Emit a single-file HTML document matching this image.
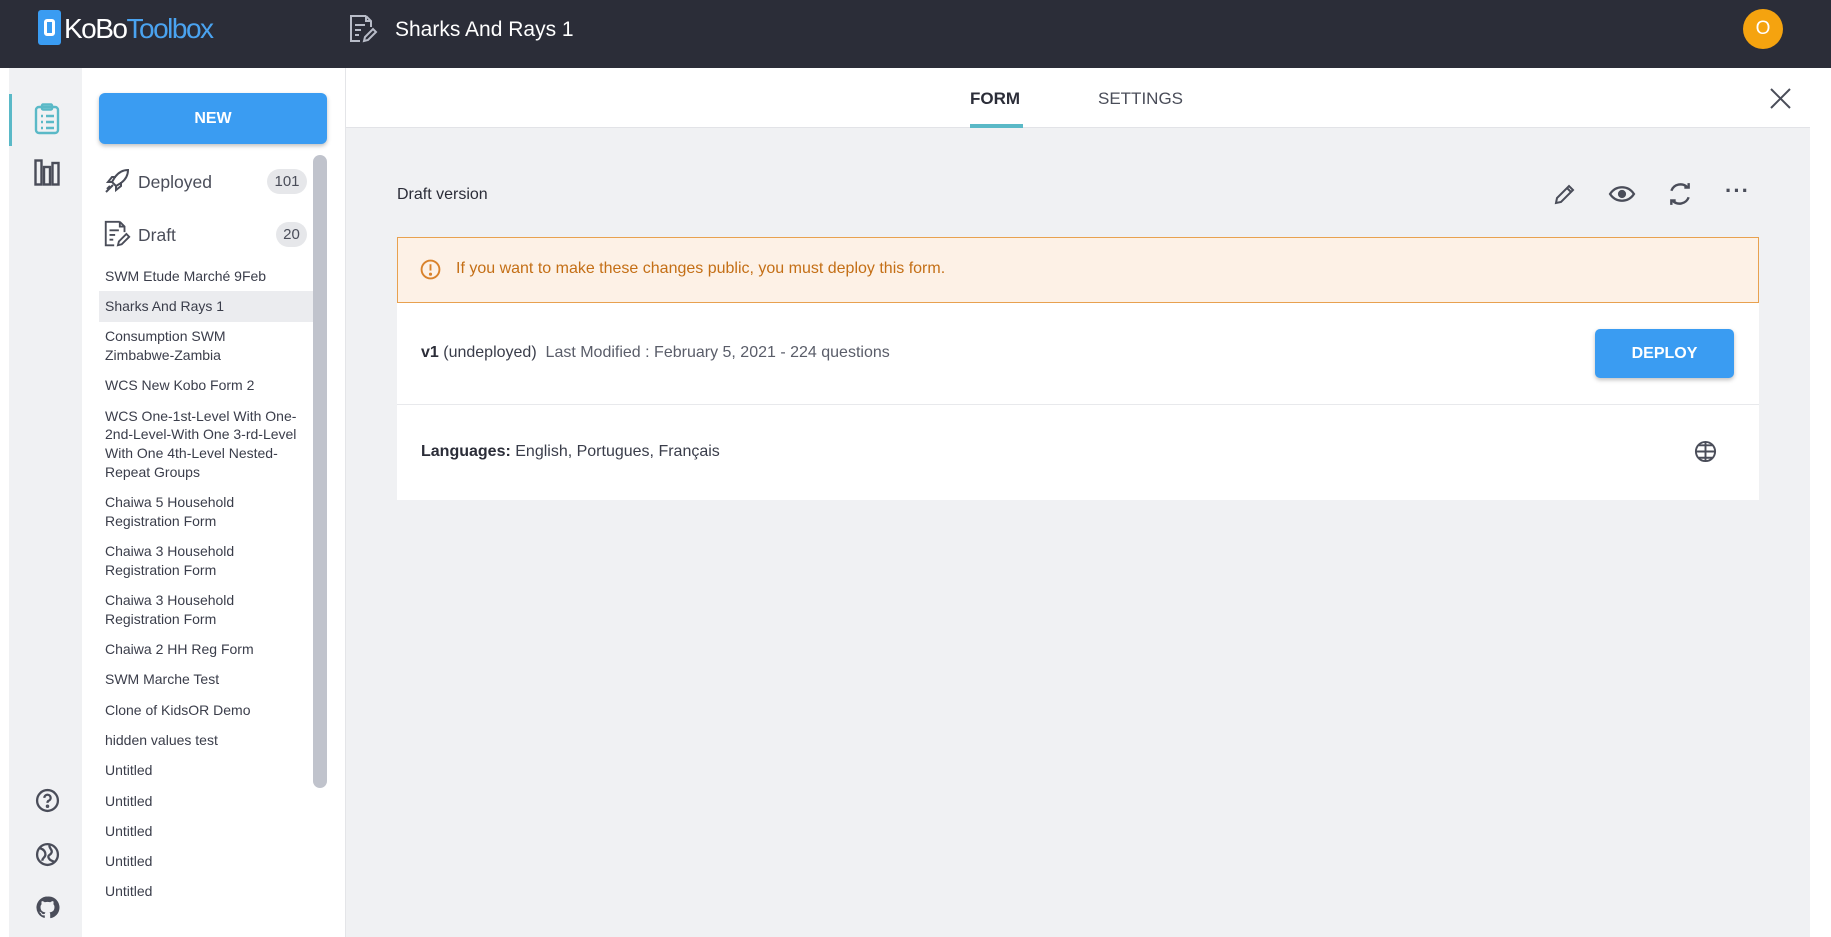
<!DOCTYPE html>
<html><head><meta charset="utf-8"><style>
*{box-sizing:border-box;margin:0;padding:0}
body{width:1831px;height:937px;overflow:hidden;font-family:"Liberation Sans",sans-serif;background:#fff;position:relative;color:#3a3d4a}
.abs{position:absolute}
#hdr{left:0;top:0;width:1831px;height:68px;background:#2b2d38}
#rail{left:9px;top:68px;width:73px;height:869px;background:#f0f1f3}
#side{left:82px;top:68px;width:264px;height:869px;background:#fff;border-right:1px solid #e4e5e8}
#main{left:346px;top:68px;width:1464px;height:869px;background:#f0f1f3}
#tabs{left:346px;top:68px;width:1464px;height:60px;background:#fff;border-bottom:1px solid #e2e3e7}
.item{font-size:14px;line-height:18.7px;padding:5.8px 0 5.8px 6px;color:#3a3d4a;width:214px;margin-left:17px}
.sel{background:#ebecef}
svg{display:block}
</style></head><body>
<div id="hdr" class="abs"></div>
<div class="abs" style="left:38px;top:10px;width:23px;height:35px;background:#3a9cf2;border-radius:3px"></div>
<div class="abs" style="left:44px;top:19px;width:11px;height:17px;border:3px solid #fff;border-radius:3px"></div>
<div class="abs" style="left:64px;top:13px;font-size:28px;color:#fff;letter-spacing:-1.5px">KoBo<span style="color:#4aa3f0">Toolbox</span></div>
<svg class="abs" style="left:347px;top:13px" width="32" height="32" viewBox="0 0 32 32" fill="none" stroke="#b8bcc8" stroke-width="2"><path d="M19 3H4v25h9M19 3l5 5v6M19 3v5h5M8 12h10M8 17h6M8 22h4"/><path d="M17 28l1-4 8-8 3 3-8 8z"/></svg>
<div class="abs" style="left:395px;top:18px;font-size:21px;color:#fff">Sharks And Rays 1</div>
<div class="abs" style="left:1743px;top:9px;width:40px;height:40px;border-radius:50%;background:#f5a30f;color:#fff;font-size:19px;text-align:center;line-height:40px">O</div>

<div id="rail" class="abs"></div>
<div class="abs" style="left:9px;top:94px;width:3px;height:52px;background:#5ab9c7"></div>
<svg class="abs" style="left:34px;top:103px" width="26" height="32" viewBox="0 0 26 32" fill="none" stroke="#5ab9c7" stroke-width="2.4"><rect x="2" y="4" width="22" height="26" rx="3"/><rect x="8" y="1.5" width="10" height="5" rx="1"/><path d="M7 13h2M12 13h8M7 19h2M12 19h8M7 25h2M12 25h8"/></svg>
<svg class="abs" style="left:34px;top:159px" width="26" height="27" viewBox="0 0 26 27" fill="none" stroke="#4a4d59" stroke-width="2.4"><rect x="1.5" y="1.5" width="6" height="24"/><rect x="10" y="8" width="6" height="17.5"/><rect x="18.5" y="4" width="6" height="21.5"/></svg>
<svg class="abs" style="left:35px;top:788px" width="25" height="25" viewBox="0 0 24 24" fill="none" stroke="#4a4d59" stroke-width="2.2"><circle cx="12" cy="12" r="10"/><path d="M9 9.5a3 3 0 1 1 4 2.8c-.8.4-1 1-1 2"/><circle cx="12" cy="17.5" r=".6" fill="#4a4d59"/></svg>
<svg class="abs" style="left:35px;top:842px" width="25" height="25" viewBox="0 0 24 24" fill="none" stroke="#4a4d59" stroke-width="2.2"><circle cx="12" cy="12" r="10"/><path d="M5 6c3 1 5 3 5 6s-3 3-3 6M14 3c-1 3 3 4 2 7s-4 2-3 5 4 3 5 4"/></svg>
<svg class="abs" style="left:35px;top:895px" width="25" height="25" viewBox="0 0 24 24" fill="#4a4d59"><path d="M12 1.5a10.5 10.5 0 0 0-3.3 20.5c.5.1.7-.2.7-.5v-2c-2.9.6-3.500-1.3-3.5-1.3-.5-1.200-1.200-1.500-1.200-1.500-1-.6 0-.6 0-.6 1 .1 1.600 1.100 1.600 1.100.9 1.600 2.500 1.100 3.100.9.1-.7.4-1.1.7-1.4-2.3-.3-4.8-1.2-4.8-5.2 0-1.1.4-2.1 1.1-2.8-.1-.3-.5-1.3.1-2.8 0 0 .9-.3 2.9 1.1a10 10 0 0 1 5.2 0c2-1.4 2.9-1.1 2.9-1.1.6 1.5.2 2.5.1 2.8.7.7 1.1 1.7 1.1 2.8 0 4-2.5 4.9-4.8 5.2.4.3.7 1 .7 2v3c0 .3.2.6.7.5A10.5 10.5 0 0 0 12 1.5z"/></svg>

<div id="side" class="abs"></div>
<div class="abs" style="left:99px;top:93px;width:228px;height:51px;background:#3a9cf2;border-radius:6px;box-shadow:0 2px 4px rgba(0,0,0,.25);color:#fff;font-weight:bold;font-size:16px;text-align:center;line-height:51px">NEW</div>
<div class="abs" style="left:313px;top:155px;width:14px;height:633px;background:#c0c3cc;border-radius:7px"></div>
<svg class="abs" style="left:104px;top:168px" width="26" height="26" viewBox="0 0 26 26" fill="none" stroke="#4a4d59" stroke-width="2"><path d="M24 2c-6 0-10 3-13 7l-3 5 4 4 5-3c4-3 7-7 7-13zM8 14l-4 0 4-5h4M12 18v4l5-4v-4M9 17l-7 7M6 18l-3 3"/></svg>
<div class="abs" style="left:138px;top:172px;font-size:17.5px;color:#4a4d59">Deployed</div>
<div class="abs" style="left:267px;top:169px;width:40px;height:25px;border-radius:13px;background:#e6e7ea;font-size:15px;text-align:center;line-height:25px;color:#4a4d59">101</div>
<svg class="abs" style="left:102px;top:219px" width="30" height="30" viewBox="0 0 32 32" fill="none" stroke="#4a4d59" stroke-width="2"><path d="M19 3H4v25h9M19 3l5 5v6M19 3v5h5M8 12h10M8 17h6M8 22h4"/><path d="M17 28l1-4 8-8 3 3-8 8z"/></svg>
<div class="abs" style="left:138px;top:225px;font-size:17.5px;color:#4a4d59">Draft</div>
<div class="abs" style="left:276px;top:222px;width:31px;height:25px;border-radius:13px;background:#e6e7ea;font-size:15px;text-align:center;line-height:25px;color:#4a4d59">20</div>
<div class="abs" style="left:82px;top:261px">
<div class="item">SWM Etude Marché 9Feb</div>
<div class="item sel">Sharks And Rays 1</div>
<div class="item">Consumption SWM<br>Zimbabwe-Zambia</div>
<div class="item">WCS New Kobo Form 2</div>
<div class="item">WCS One-1st-Level With One-<br>2nd-Level-With One 3-rd-Level<br>With One 4th-Level Nested-<br>Repeat Groups</div>
<div class="item">Chaiwa 5 Household<br>Registration Form</div>
<div class="item">Chaiwa 3 Household<br>Registration Form</div>
<div class="item">Chaiwa 3 Household<br>Registration Form</div>
<div class="item">Chaiwa 2 HH Reg Form</div>
<div class="item">SWM Marche Test</div>
<div class="item">Clone of KidsOR Demo</div>
<div class="item">hidden values test</div>
<div class="item">Untitled</div>
<div class="item">Untitled</div>
<div class="item">Untitled</div>
<div class="item">Untitled</div>
<div class="item">Untitled</div>
</div>

<div id="main" class="abs"></div>
<div id="tabs" class="abs"></div>
<div class="abs" style="left:970px;top:89px;font-size:17px;font-weight:bold;color:#2b2d38">FORM</div>
<div class="abs" style="left:970px;top:124px;width:53px;height:4px;background:#5ab9c7"></div>
<div class="abs" style="left:1098px;top:89px;font-size:17px;color:#4a4d59">SETTINGS</div>
<svg class="abs" style="left:1770px;top:88px" width="21" height="21" viewBox="0 0 21 21" stroke="#4a4d59" stroke-width="2"><path d="M1 1l19 19M20 1L1 20"/></svg>

<div class="abs" style="left:397px;top:186px;font-size:16px;color:#2b2d38">Draft version</div>
<svg class="abs" style="left:1553px;top:182px" width="24" height="24" viewBox="0 0 24 24" fill="none" stroke="#4a4d59" stroke-width="2"><path d="M3 21l1-5L16 4l4 4L8 20zM14 6l4 4"/></svg>
<svg class="abs" style="left:1608px;top:183px" width="28" height="22" viewBox="0 0 28 22" fill="none" stroke="#4a4d59" stroke-width="2.2"><path d="M2 11c6-9 18-9 24 0-6 9-18 9-24 0z"/><circle cx="14" cy="11" r="3" fill="#4a4d59"/></svg>
<svg class="abs" style="left:1667px;top:181px" width="26" height="26" viewBox="0 0 24 24" fill="none" stroke="#4a4d59" stroke-width="2.2"><path d="M19 6A9 9 0 0 0 4 9M5 18a9 9 0 0 0 15-3M16 6h4V2M8 18H4v4"/></svg>
<div class="abs" style="left:1725px;top:178px;font-size:22px;font-weight:bold;color:#4a4d59;letter-spacing:1px">···</div>

<div class="abs" style="left:397px;top:237px;width:1362px;height:66px;background:#fdf1e6;border:1px solid #e8a14f"></div>
<svg class="abs" style="left:420px;top:259px" width="21" height="21" viewBox="0 0 20 20" fill="none" stroke="#d9822b" stroke-width="1.8"><circle cx="10" cy="10" r="8.5"/><path d="M10 5v6"/><circle cx="10" cy="14.5" r=".6" fill="#d9822b"/></svg>
<div class="abs" style="left:456px;top:260px;font-size:16px;color:#c46f16">If you want to make these changes public, you must deploy this form.</div>

<div class="abs" style="left:397px;top:303px;width:1362px;height:197px;background:#fff"></div>
<div class="abs" style="left:397px;top:404px;width:1362px;height:1px;background:#e8e9ec"></div>
<div class="abs" style="left:421px;top:344px;font-size:16px;color:#3a3d4a"><b style="color:#2b2d38">v1</b> (undeployed) <span style="color:#5a5d69">&nbsp;Last Modified : February 5, 2021 - 224 questions</span></div>
<div class="abs" style="left:1595px;top:329px;width:139px;height:49px;background:#3a9cf2;border-radius:5px;box-shadow:0 2px 4px rgba(0,0,0,.25);color:#fff;font-weight:bold;font-size:16px;text-align:center;line-height:49px">DEPLOY</div>
<div class="abs" style="left:421px;top:443px;font-size:16px;color:#3a3d4a"><b style="color:#2b2d38">Languages:</b> English, Portugues, Français</div>
<svg class="abs" style="left:1694px;top:440px" width="23" height="23" viewBox="0 0 24 24" fill="none" stroke="#4a4d59" stroke-width="2"><circle cx="12" cy="12" r="10"/><path d="M2 12h20M12 2v20M5 5.5h14M5 18.5h14"/></svg>
</body></html>
